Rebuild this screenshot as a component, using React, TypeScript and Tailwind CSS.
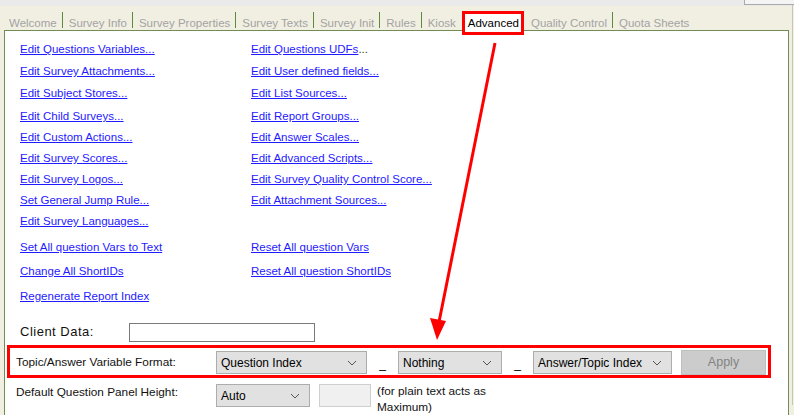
import React from "react";

const tabs = [
  "Welcome",
  "Survey Info",
  "Survey Properties",
  "Survey Texts",
  "Survey Init",
  "Rules",
  "Kiosk",
  "Advanced",
  "Quality Control",
  "Quota Sheets",
];

// rows of the link grid: left link, right link, row height
const linkRows: [string, string, string][] = [
  ["Edit Questions Variables...", "Edit Questions UDFs", "h-[22px]"],
  ["Edit Survey Attachments...", "Edit User defined fields...", "h-[22px]"],
  ["Edit Subject Stores...", "Edit List Sources...", "h-[23px]"],
  ["Edit Child Surveys...", "Edit Report Groups...", "h-[21px]"],
  ["Edit Custom Actions...", "Edit Answer Scales...", "h-[21px]"],
  ["Edit Survey Scores...", "Edit Advanced Scripts...", "h-[21px]"],
  ["Edit Survey Logos...", "Edit Survey Quality Control Score...", "h-[21px]"],
  ["Set General Jump Rule...", "Edit Attachment Sources...", "h-[19px]"],
  ["Edit Survey Languages...", "", "h-[28px]"],
  ["Set All question Vars to Text", "Reset All question Vars", "h-[22px]"],
  ["Change All ShortIDs", "Reset All question ShortIDs", "h-[27px]"],
  ["Regenerate Report Index", "", "h-[22px]"],
];

function Chevron() {
  return (
    <svg width="10" height="6" viewBox="0 0 10 6" className="shrink-0">
      <polyline points="1,1 5,5 9,1" fill="none" stroke="#555" strokeWidth="1" />
    </svg>
  );
}

function Select({ value, w }: { value: string; w: string }) {
  return (
    <div
      className={`${w} h-[23px] bg-[#e1e1e1] border border-[#adadad] flex items-center justify-between pl-[4px] pr-[9px] text-[12px] text-black`}
    >
      <span>{value}</span>
      <Chevron />
    </div>
  );
}

function Link({ text }: { text: string }) {
  if (!text) return null;
  if (text === "Edit Questions UDFs") {
    return (
      <span className="text-[11.5px] text-[#1f1aff]">
        <span className="underline">Edit Questions UDFs</span>
        <span className="text-[#333]">...</span>
      </span>
    );
  }
  return <span className="text-[11.5px] text-[#1f1aff] underline">{text}</span>;
}

export default function App() {
  return (
    <div className="relative w-[794px] h-[415px] overflow-hidden bg-[#f1efe2] font-['Liberation_Sans',Arial,sans-serif]">
      {/* top strip */}
      <div className="h-[6px] bg-[#eaeaea] flex justify-end">
        <div className="w-[50px] h-[5px] bg-[#f4f4f4] border-l border-b border-[#aaa]" />
      </div>

      {/* tabs */}
      <div className="flex h-[24px] pl-[9px] text-[11.5px] leading-[13px]">
        {tabs.map((t, i) => {
          if (t === "Advanced") {
            return (
              <div
                key={t}
                className="relative z-10 self-end h-[20px] mb-[-1px] ml-[8px] mr-[8px] px-[3px] pt-[5px] bg-white border border-b-0 border-[#718c55] text-black"
              >
                {t}
              </div>
            );
          }
          const next = tabs[i + 1];
          return (
            <div key={t} className="flex h-full text-[#a3a3a3]">
              <span className="pt-[11px]">{t}</span>
              {next && next !== "Advanced" && (
                <span className="w-px h-[16px] mt-[6px] bg-[#5d8a3c] ml-[5px] mr-[6px]" />
              )}
            </div>
          );
        })}
      </div>

      {/* panel */}
      <div className="flex">
        <div className="ml-[4px] w-[785px] h-[400px] bg-white border border-[#718c55] pt-[5px] pl-[15px]">
          {linkRows.map(([l, r, h], i) => (
            <div key={i} className={`grid grid-cols-[231px_1fr] ${h} items-center`}>
              <div>
                <Link text={l} />
              </div>
              <div>
                <Link text={r} />
              </div>
            </div>
          ))}

          {/* client data */}
          <div className="flex items-center h-[24px] mt-[15px]">
            <span className="w-[109px] text-[13px] tracking-[0.5px] text-[#111]">Client Data:</span>
            <div className="w-[186px] h-[19px] border border-[#7a7a7a] bg-white" />
          </div>

          {/* highlighted row */}
          <div className="ml-[-13px] mt-[1px] w-[764px] h-[33px] border-[3px] border-[#ff0000] flex items-center pl-[6px] pt-[2px]">
            <span className="w-[200px] text-[11.8px] text-[#111]">Topic/Answer Variable Format:</span>
            <Select value="Question Index" w="w-[151px]" />
            <span className="w-[31px] text-center self-end mb-[2px] text-[12px]">_</span>
            <Select value="Nothing" w="w-[104px]" />
            <span className="w-[31px] text-center self-end mb-[2px] text-[12px]">_</span>
            <Select value="Answer/Topic Index" w="w-[139px]" />
            <div className="ml-[9px] w-[85px] h-[25px] bg-[#cccccc] border border-[#bfbfbf] flex items-center justify-center text-[12.5px] text-[#838383]">
              Apply
            </div>
          </div>

          {/* panel height row */}
          <div className="flex items-start ml-[-4px] mt-[6px]">
            <span className="w-[200px] text-[11.8px] text-[#111] leading-[15px] pt-[1px]">
              Default Question Panel Height:
            </span>
            <Select value="Auto" w="w-[94px]" />
            <div className="ml-[9px] w-[52px] h-[23px] bg-[#f0f0f0] border border-[#cfcfcf]" />
            <span className="ml-[6px] text-[11.8px] leading-[16px] text-[#111] mt-[-1px]">
              (for plain text acts as
              <br />
              Maximum)
            </span>
          </div>
          <div className="flex ml-[196px] mt-[1px]">
            <div className="w-[94px] h-[23px] bg-[#e1e1e1] border border-[#adadad]" />
            <div className="ml-[9px] w-[52px] h-[23px] bg-[#f0f0f0] border border-[#cfcfcf]" />
          </div>
        </div>
        <div className="ml-[3px] w-px h-[400px] bg-[#c8c6b8] mt-[-25px]" />
      </div>

      {/* annotations */}
      <div className="absolute left-[462px] top-[11px] w-[62px] h-[24px] border-[3px] border-[#ff0000] z-20" />
      <svg className="absolute left-0 top-0 z-20 pointer-events-none" width="794" height="415">
        <line x1="495" y1="43" x2="439" y2="322" stroke="#ff0000" strokeWidth="3" />
        <polygon points="430,318 446,321 437,340" fill="#ff0000" />
      </svg>
    </div>
  );
}
